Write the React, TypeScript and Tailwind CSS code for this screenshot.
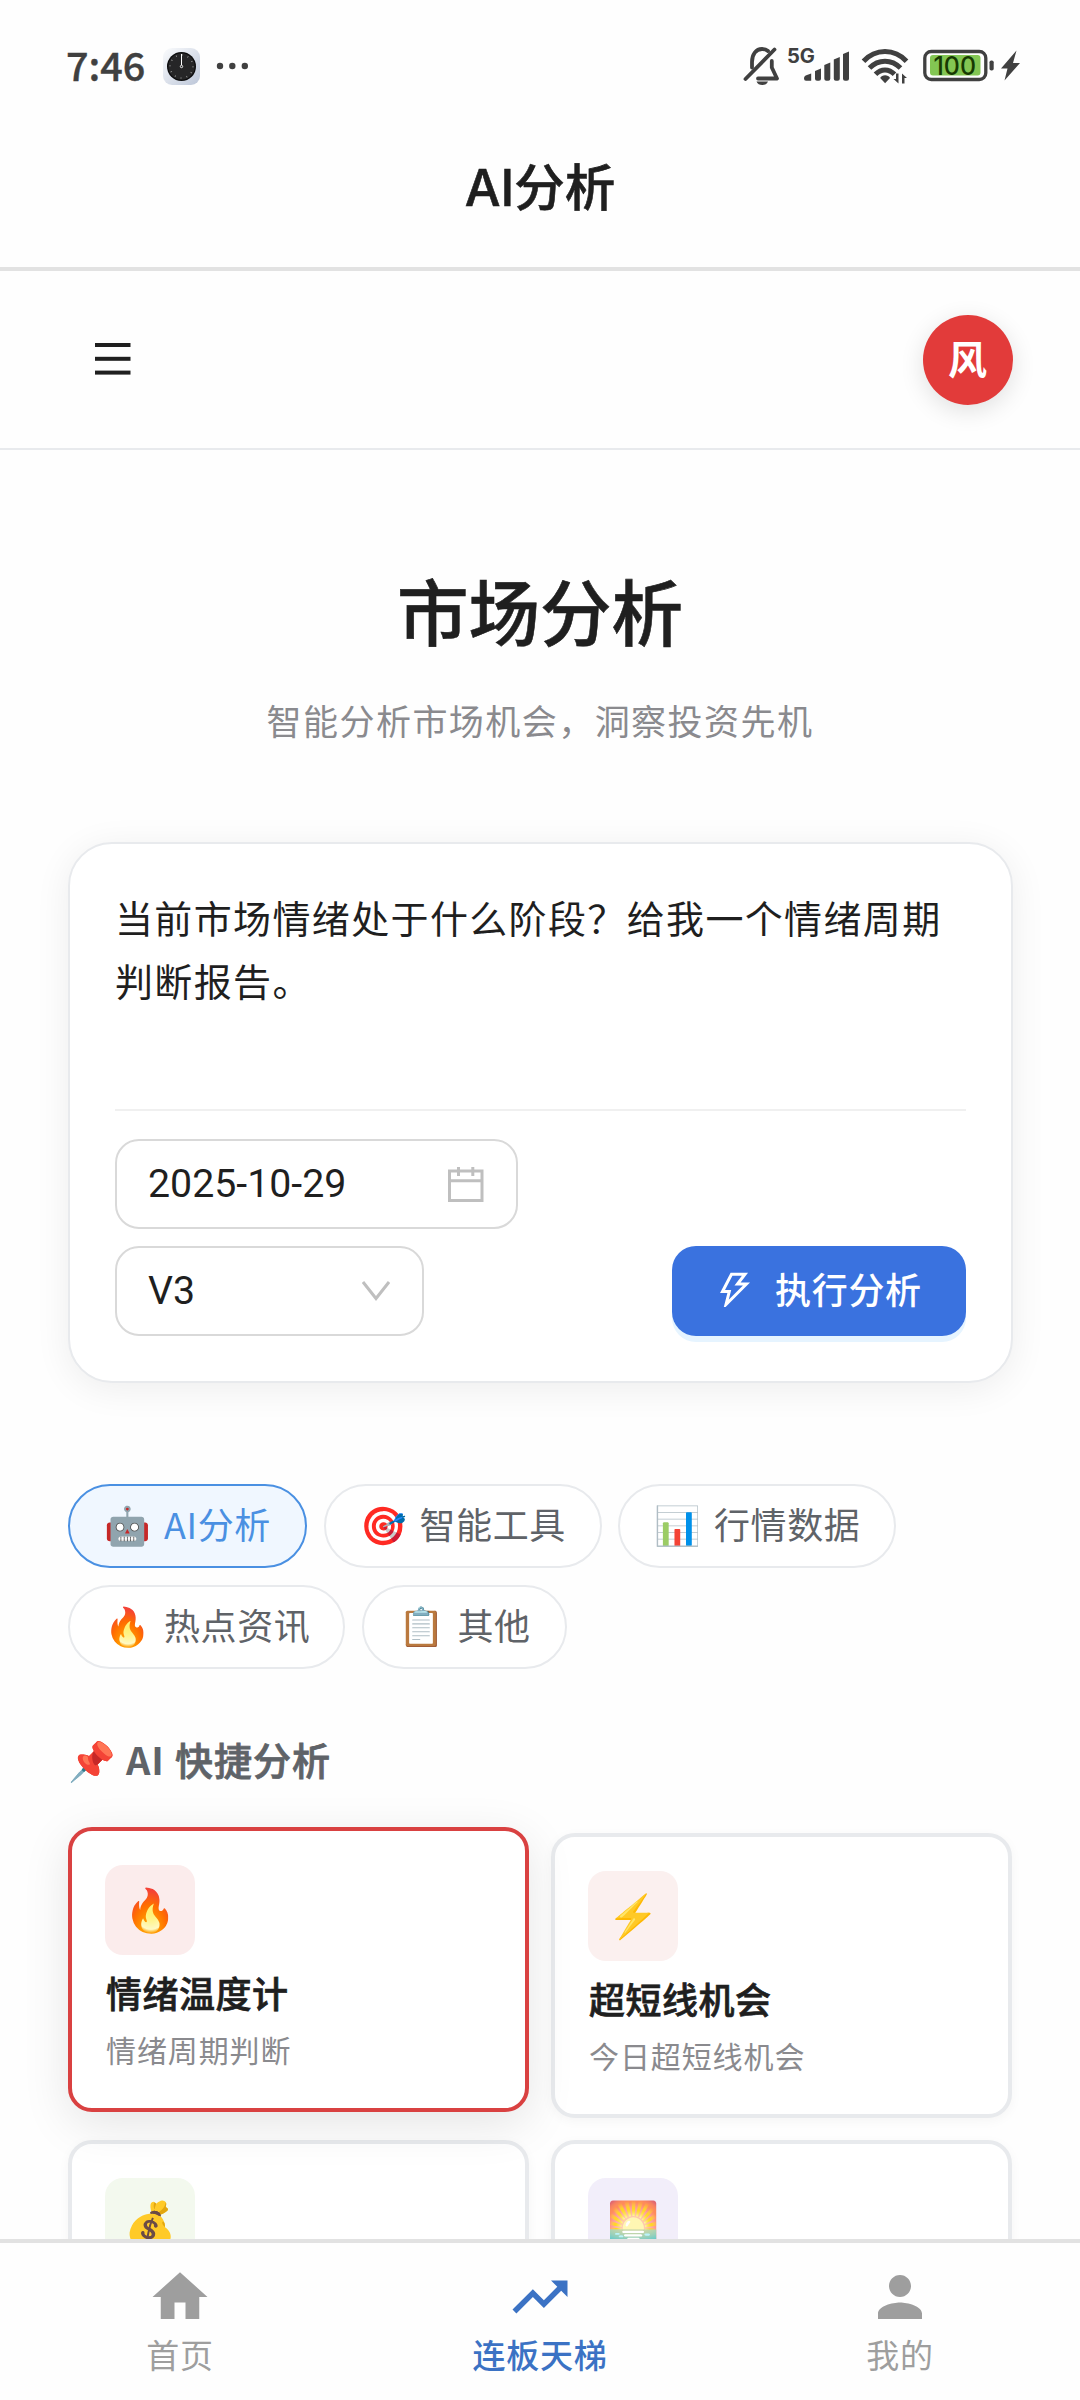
import { clsx } from 'clsx'
import { MdHome, MdPerson, MdTrendingUp } from 'react-icons/md'

const tabs = [
  { icon: '🤖', label: 'AI分析', width: 'w-[239px]', active: true },
  { icon: '🎯', label: '智能工具', width: 'w-[278px]' },
  { icon: '📊', label: '行情数据', width: 'w-[278px]' },
  { icon: '🔥', label: '热点资讯', width: 'w-[277px]' },
  { icon: '📋', label: '其他', width: 'w-[205px]' },
]

const cards = [
  { icon: '🔥', title: '情绪温度计', desc: '情绪周期判断', tint: 'bg-[#fbecec]', active: true },
  { icon: '⚡', title: '超短线机会', desc: '今日超短线机会', tint: 'bg-[#fbf0ef]' },
  { icon: '💰', tint: 'bg-[#f3f9ee]' },
  { icon: '🌅', tint: 'bg-[#f2eefa]' },
]

const navItems = [
  { Icon: MdHome, label: '首页' },
  { Icon: MdTrendingUp, label: '连板天梯', active: true },
  { Icon: MdPerson, label: '我的' },
]

function StatusBar() {
  return (
    <div className="flex h-[132px] shrink-0 items-center justify-between pr-[60px] pl-[66px] text-[#404040]">
      <div className="flex items-center">
        <span className="mb-[4px] w-[97px] text-[39.5px] leading-none font-medium [-webkit-text-stroke:0.4px]">7:46</span>
        <svg className="h-[37px] w-[37px]" viewBox="0 0 37 37">
          <defs>
            <linearGradient id="clock" x1="0" y1="0" x2="1" y2="1">
              <stop offset="0" stopColor="#fbfcfd" />
              <stop offset="1" stopColor="#bcc6d8" />
            </linearGradient>
          </defs>
          <rect width="37" height="37" rx="9" fill="url(#clock)" />
          <circle cx="18.5" cy="18.5" r="14.5" fill="#0c0c0d" />
          <circle cx="18.5" cy="18.5" r="13.2" fill="#262627" />
          <circle cx="18.5" cy="18.5" r="11.5" fill="none" stroke="#999" strokeWidth="1.6" strokeDasharray="0.8 5.22" />
          <path d="M18.5 6v11" stroke="#fff" strokeWidth="1" />
          <circle cx="18.5" cy="18.5" r="1.2" fill="none" stroke="#fff" strokeWidth="0.9" />
        </svg>
        <svg className="ml-[16px] h-[8px] w-[34px]" viewBox="0 0 34 8" fill="currentColor">
          <circle cx="4" cy="4" r="3.2" />
          <circle cx="16.3" cy="4" r="3.2" />
          <circle cx="28.8" cy="4" r="3.2" />
        </svg>
      </div>

      <svg className="h-[44px] w-[280px]" viewBox="740 44 280 44" fill="currentColor">
        {/* muted bell */}
        <g fill="none" stroke="currentColor" strokeWidth="3.8" strokeLinecap="round" strokeLinejoin="round">
          <path d="M774.5 49.5 745.5 79" />
          <path d="M752 67.500v-5.500c0-7.500 4-13 10-13 2.500 0 4.500 .6 6 2" />
          <path d="M771.8 61v6.500l5.200 11h-19" />
        </g>
        <path d="M756.5 81.500h11.500c-1.500 4.700-10 4.700-11.500 0z" />
        <text x="787" y="63" fontSize="19.5" fontWeight="700" fontFamily="Inter" textLength="28" lengthAdjust="spacingAndGlyphs">5G</text>
        {/* signal */}
        <path d="M804 78.500q0-3 3-3.500l4.200-1.500V80.700H806q-2 0-2-2.200zM815 71l6-2.500V78.700a2 2 0 0 1-2 2h-2a2 2 0 0 1-2-2zM824.300 65l6-2.500V78.700a2 2 0 0 1-2 2h-2a2 2 0 0 1-2-2zM833.800 59.500l6-2.500V78.700a2 2 0 0 1-2 2h-2a2 2 0 0 1-2-2zM843 54l6-2.500V78.700a2 2 0 0 1-2 2h-2a2 2 0 0 1-2-2z" />
        {/* wifi */}
        <g fill="none" stroke="currentColor" strokeWidth="5">
          <path d="M863.500 61.300c12-13 31-13 43 0" />
          <path d="M869.500 68c9-9 22-9 31 0" />
          <path d="M875.500 74.300c5.500-5.800 13.500-5.800 19 0" />
        </g>
        <path d="M880.200 78c1.500-3.600 8.300-3.600 9.800 0l-4.900 5.200z" />
        <path d="M898.500 73.500v10l-5-4.500h2.500v-5.500zM902 83.500v-10l5 4.500h-2.500v5.500z" />
        {/* battery */}
        <rect x="924.8" y="51.500" width="61" height="28" rx="6.5" fill="none" stroke="currentColor" strokeWidth="3.3" />
        <rect x="930" y="55" width="50.500" height="20.500" rx="3" fill="#83c653" />
        <rect x="989.5" y="60.500" width="4.200" height="10" rx="1.8" />
        <text x="933.5" y="74.800" fontSize="25.5" fontWeight="500" fontFamily="Inter" fill="#173a02" textLength="42.5" lengthAdjust="spacingAndGlyphs">100</text>
        <path d="M1016.500 50.500 1001 68.500h6.500l-3 12L1020 63h-7z" />
      </svg>
    </div>
  )
}

function CalendarIcon() {
  return (
    <svg className="h-[37px] w-[36px]" viewBox="0 0 36 37" fill="none" stroke="#bfbfbf" strokeWidth="3">
      <rect x="1.5" y="5" width="32.5" height="29.5" />
      <path d="M1.500 14.800h32.500M10.500 1v9M24.800 1v9" />
    </svg>
  )
}

function PromptCard() {
  return (
    <section className="mt-[96px] mr-[67px] ml-[68px] h-[541px] rounded-[44px] border-2 border-[#e8eaed] bg-white px-[45px] pt-[43px] shadow-[0_6px_36px_rgba(0,0,0,0.07)]">
      <p className="-mt-[3px] h-[225px] pt-[1px] text-[38px] leading-[63px] tracking-[1.36px] whitespace-nowrap text-[#1f1f1f]">
        当前市场情绪处于什么阶段？给我一个情绪周期
        <br />
        判断报告。
      </p>
      <div className="border-t-2 border-[#f0f0f0] pt-[28px]">
        <div className="flex h-[90px] w-[403px] items-center justify-between rounded-[24px] border-2 border-[#d9d9d9] pr-[32px] pl-[31px]">
          <span className="font-[Roboto] text-[39.3px] text-[#1f1f1f]">2025-10-29</span>
          <CalendarIcon />
        </div>
        <div className="mt-[17px] flex justify-between">
          <div className="flex h-[90px] w-[309px] items-center justify-between rounded-[24px] border-2 border-[#d9d9d9] pr-[32px] pl-[31px]">
            <span className="font-[Roboto] text-[39.3px] text-[#1f1f1f]">V3</span>
            <svg className="h-[20px] w-[28px]" viewBox="0 0 28 20" fill="none" stroke="#bfbfbf" strokeWidth="3">
              <path d="M1 1l13 16.500L27 1" />
            </svg>
          </div>
          <button className="flex h-[90px] w-[294px] items-center rounded-[24px] bg-[#3a72df] pl-[48px] text-white shadow-[0_6px_0_#e6f4ff]">
            <svg className="mb-[5px] h-[36px] w-[30px]" viewBox="0 0 30 36" fill="none" stroke="currentColor" strokeWidth="3">
              <path d="M11.500 3.200H25L17.500 13H26.500L6 33.500 9.300 20.500H2.500z" />
            </svg>
            <span className="mb-[6px] ml-[25px] text-[36px] font-medium tracking-[0.7px] whitespace-nowrap">执行分析</span>
          </button>
        </div>
      </div>
    </section>
  )
}

export default function App() {
  return (
    <div className="flex h-[2400px] w-[1080px] flex-col overflow-hidden bg-[#fefefe] font-['Noto_Sans_CJK_SC',sans-serif]">
      <StatusBar />
      <header className="flex h-[139px] shrink-0 justify-center border-b-4 border-[#e2e2e2] pt-[16px]">
        <h1 className="font-['Inter','Noto_Sans_CJK_SC',sans-serif] text-[50.5px] leading-[80px] font-medium text-[#1f1f1f] [-webkit-text-stroke:0.6px]">
          AI分析
        </h1>
      </header>

      <div className="flex h-[179px] shrink-0 items-center justify-between border-b-2 border-[#e8eaed] pr-[67px] pl-[95px]">
        <svg className="mb-[2px] h-[34px] w-[36px]" viewBox="0 0 36 34" fill="#1f1f1f">
          <rect y="1" width="35.5" height="4" />
          <rect y="14.8" width="35.5" height="4" />
          <rect y="28.6" width="35.5" height="4" />
        </svg>
        <div className="flex h-[90px] w-[90px] items-center justify-center rounded-full bg-[#e23b3a] pr-[1px] pb-[4px] text-[39px] font-bold text-white shadow-[0_6px_24px_rgba(0,0,0,0.12)]">
          风
        </div>
      </div>

      <main className="min-h-0 flex-1 overflow-hidden">
        <div className="pt-[105px] text-center">
          <h2 className="text-[71.5px] leading-[108px] font-medium text-[#1f1f1f] [-webkit-text-stroke:0.6px]">市场分析</h2>
          <p className="mt-[31px] text-[35px] leading-[52px] tracking-[1.45px] text-[#8a8a8e]">智能分析市场机会，洞察投资先机</p>
        </div>

        <PromptCard />

        <div className="mt-[101px] flex flex-wrap gap-x-[16.5px] gap-y-[17px] px-[68px]">
          {tabs.map((tab) => (
            <button
              key={tab.label}
              className={clsx(
                'flex h-[84px] items-center rounded-full border-2 pb-[6px] pl-[34px] text-left text-[36px] whitespace-nowrap',
                tab.width,
                tab.active ? 'border-[#4a90e2] bg-[#f0f7ff] text-[#4a90e2]' : 'border-[#e8eaed] bg-white text-[#5f6368]'
              )}
            >
              <span className="w-[60px] shrink-0 text-[37.5px]">{tab.icon}</span>
              <span className="tracking-[0.6px]">{tab.label}</span>
            </button>
          ))}
        </div>

        <h3 className="mt-[60px] flex h-[58px] items-center px-[68px] text-[38px] font-medium tracking-[1px] text-[#5f6368] [-webkit-text-stroke:0.8px]">
          <span className="w-[58px]">📌</span>
          <span className="mr-[10px] font-bold [-webkit-text-stroke:0px]">AI</span>快捷分析
        </h3>

        <div className="mt-[46px] grid grid-cols-2 gap-[22px] px-[68px]">
          {cards.map((card) => (
            <div
              key={card.icon}
              className={clsx(
                'h-[285px] rounded-[24px] border-4 bg-white px-[33px] pt-[34px]',
                card.active
                  ? '-translate-y-[6px] border-[#d94141] shadow-[0_12px_48px_rgba(0,0,0,0.1)]'
                  : 'border-[#e8eaed] shadow-[0_3px_12px_rgba(0,0,0,0.04)]'
              )}
            >
              <div className={clsx('flex h-[90px] w-[90px] items-center justify-center rounded-[18px] pb-[8px] text-[42px]', card.tint)}>
                {card.icon}
              </div>
              {card.title && (
                <div className="pl-[1px]">
                  <h4 className="mt-[11px] text-[36px] leading-[52px] font-medium tracking-[0.5px] text-[#1f1f1f] [-webkit-text-stroke:0.7px]">
                    {card.title}
                  </h4>
                  <p className="mt-[9px] text-[30px] leading-[44px] tracking-[0.9px] text-[#8a8a8e]">{card.desc}</p>
                </div>
              )}
            </div>
          ))}
        </div>
      </main>

      <nav className="grid h-[161px] shrink-0 grid-cols-3 border-t-4 border-[#e2e2e2] bg-[#fefefe]">
        {navItems.map(({ Icon, label, active }) => (
          <a
            key={label}
            className={clsx('flex flex-col items-center pt-[21px]', active ? 'font-medium text-[#3b72c4]' : 'text-[#9e9e9e]')}
          >
            <Icon className="h-[66px] w-[66px]" />
            <span className="text-[33px] leading-[48px] tracking-[0.8px]">{label}</span>
          </a>
        ))}
      </nav>
    </div>
  )
}
